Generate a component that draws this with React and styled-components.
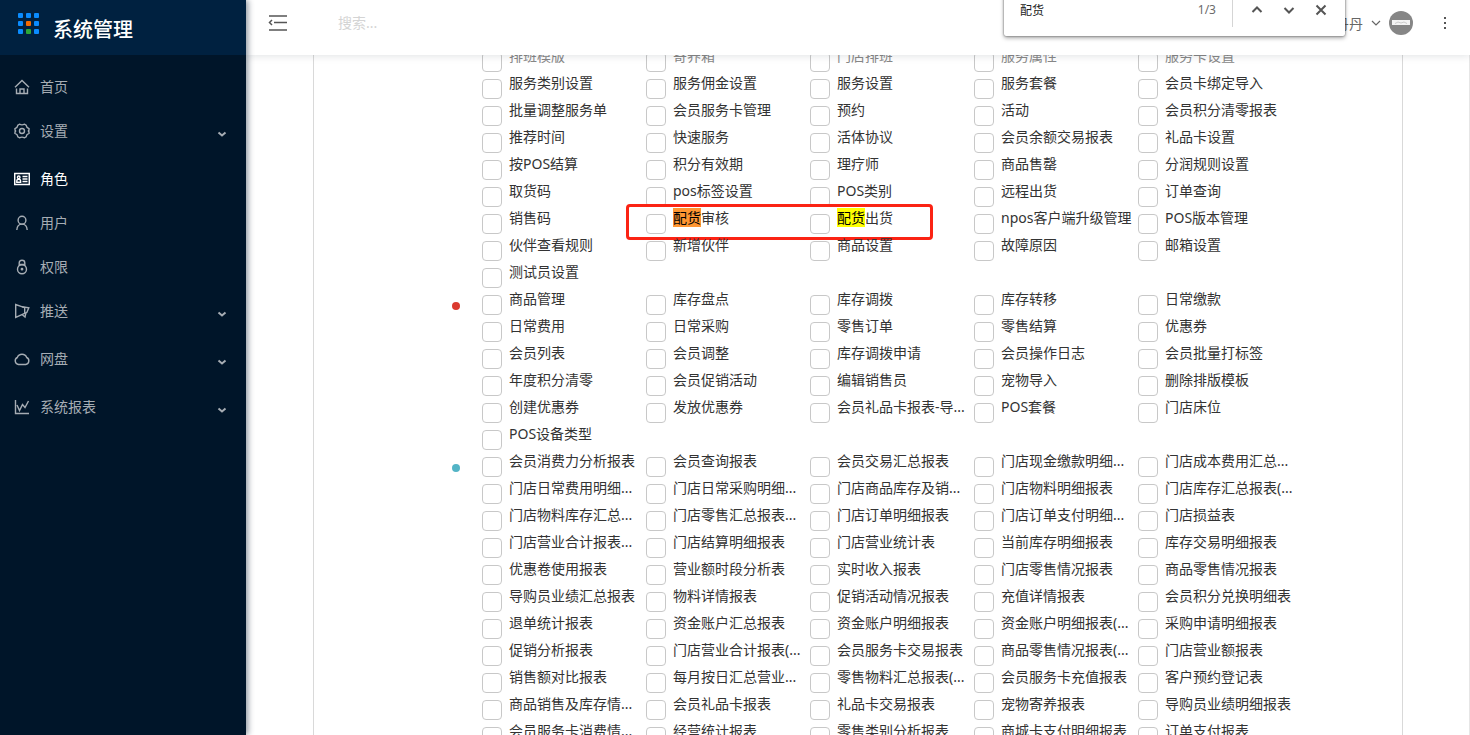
import React, { useState } from 'react';
import styled, { createGlobalStyle } from 'styled-components';

const GlobalStyle = createGlobalStyle`
  * {
    box-sizing: border-box;
  }

  body {
    margin: 0;
    background: #fff;
    color: #333;
    font-family: 'Noto Sans', 'Noto Sans CJK SC', sans-serif;
    font-size: 14px;
  }

  ul {
    list-style: none;
    margin: 0;
    padding: 0;
  }

  button {
    border: none;
    padding: 0;
    background: none;
    font: inherit;
    cursor: pointer;
  }
`;

const Layout = styled.div`
  display: flex;
  height: 100vh;
  overflow: hidden;
`;

const Sidebar = styled.aside`
  flex: 0 0 246px;
  z-index: 3;
  background: #001529;
  box-shadow: 2px 0 6px rgba(0, 21, 41, 0.45);
`;

const Brand = styled.div`
  display: flex;
  align-items: center;
  gap: 14px;
  height: 55px;
  padding: 0 16px 8px;
  background: #002140;
  color: #fff;
`;

const BrandName = styled.h1`
  margin: 0;
  padding-top: 12px;
  font-size: 20px;
  line-height: 24px;
  font-weight: 500;
`;

const Menu = styled.ul`
  padding: 12px 0;
`;

const MenuItem = styled.li`
  margin-bottom: ${(props) => (props.$sub ? 8 : 4)}px;
`;

const MenuLink = styled.a`
  display: flex;
  align-items: center;
  height: 40px;
  padding: 0 18px 0 14px;
  color: ${(props) => (props.$active ? '#fff' : '#a6adb4')};
  text-decoration: none;

  span {
    flex: 1;
    margin-left: 10px;
    padding-bottom: 2px;
  }
`;

const ArrowIcon = styled.svg`
  margin-top: 6px;
`;

const Main = styled.main`
  flex: 1;
  min-width: 0;
  display: flex;
  flex-direction: column;
`;

const Header = styled.header`
  position: relative;
  z-index: 2;
  flex: none;
  display: flex;
  align-items: center;
  height: 55px;
  padding: 0 18px 10px 22px;
  background: #fff;
  box-shadow: 0 1px 8px rgba(0, 21, 41, 0.12);
`;

const IconButton = styled.button`
  display: flex;
  align-items: center;
  justify-content: center;
  width: ${(props) => props.$width}px;
  height: 24px;
  color: #555;
`;

const SearchInput = styled.input`
  flex: 1;
  min-width: 0;
  margin-left: 50px;
  padding: 0;
  border: none;
  outline: none;
  font: inherit;

  &::placeholder {
    color: #d4d4d4;
  }
`;

const UserButton = styled.button`
  display: flex;
  align-items: center;
  gap: 7px;
  margin-right: 25px;
  color: #666;
`;

const FindBar = styled.div`
  position: absolute;
  z-index: 5;
  top: -16px;
  right: 125px;
  display: flex;
  align-items: center;
  width: 341px;
  height: 52px;
  padding: 0 8px 0 16px;
  background: #fff;
  border-radius: 2px;
  box-shadow: 0 0 2px rgba(0, 0, 0, 0.6), 0 2px 4px rgba(0, 0, 0, 0.35);
`;

const FindInput = styled.input`
  flex: 1;
  min-width: 0;
  padding: 0;
  border: none;
  outline: none;
  font: inherit;
  font-size: 12px;
  color: #222;
`;

const FindCount = styled.span`
  padding-right: 16px;
  border-right: 1px solid #d5d5d5;
  margin-right: 8px;
  font-size: 12px;
  line-height: 34px;
  color: #6b6b6b;
`;

const Content = styled.div`
  flex: 1;
  min-height: 0;
  overflow: hidden;
  padding: 0 66px 0 67px;
  border-right: 1px solid #e6e6e6;
`;

const Panel = styled.form`
  margin-top: -9px;
  padding: 0 100px 0 138px;
  border: 1px solid #d9d9d9;
  border-width: 0 1px;
`;

const Group = styled.section`
  display: flex;
`;

const Dot = styled.i`
  flex: none;
  width: 8px;
  height: 8px;
  margin: 13px 22px 0 0;
  border-radius: 50%;
  background: ${(props) => props.$color};
`;

const PermissionGrid = styled.ul`
  flex: 1;
  max-width: 820px;
  display: grid;
  grid-template-columns: repeat(5, 1fr);
`;

const Permission = styled.li`
  position: relative;
  height: 27px;
`;

const PermissionLabel = styled.label`
  display: flex;
  gap: 7px;
  line-height: 20px;
  white-space: nowrap;
  color: ${(props) => (props.$faded ? '#888' : '#333')};
`;

const Checkbox = styled.input`
  appearance: none;
  flex: none;
  width: 20px;
  height: 20px;
  margin: 6px 0 0;
  border: 1px solid #c8c8c8;
  border-radius: 4px;
  background: #fff;

  &:checked {
    background: #1890ff;
    border-color: #1890ff;
  }
`;

const Mark = styled.mark`
  background: ${(props) => (props.$current ? '#ff9632' : '#ff0')};
  color: #000;
`;

const Callout = styled.div`
  position: absolute;
  top: -4px;
  left: -20px;
  width: 307px;
  height: 36px;
  border: 3px solid #fb2314;
  border-radius: 4px;
  pointer-events: none;
`;

const MENU = [
  { name: '首页', icon: 'home' },
  { name: '设置', icon: 'setting', sub: true },
  { name: '角色', icon: 'role', active: true },
  { name: '用户', icon: 'user' },
  { name: '权限', icon: 'lock' },
  { name: '推送', icon: 'push', sub: true },
  { name: '网盘', icon: 'cloud', sub: true },
  { name: '系统报表', icon: 'chart', sub: true },
];

const GROUPS = [
  {
    color: 'transparent',
    items: [
      '排班模版', '寄养箱', '门店排班', '服务属性', '服务卡设置',
      '服务类别设置', '服务佣金设置', '服务设置', '服务套餐', '会员卡绑定导入',
      '批量调整服务单', '会员服务卡管理', '预约', '活动', '会员积分清零报表',
      '推荐时间', '快速服务', '活体协议', '会员余额交易报表', '礼品卡设置',
      '按POS结算', '积分有效期', '理疗师', '商品售罄', '分润规则设置',
      '取货码', 'pos标签设置', 'POS类别', '远程出货', '订单查询',
      '销售码', '配货审核', '配货出货', 'npos客户端升级管理', 'POS版本管理',
      '伙伴查看规则', '新增伙伴', '商品设置', '故障原因', '邮箱设置',
      '测试员设置',
    ],
  },
  {
    color: '#db3a2f',
    items: [
      '商品管理', '库存盘点', '库存调拨', '库存转移', '日常缴款',
      '日常费用', '日常采购', '零售订单', '零售结算', '优惠券',
      '会员列表', '会员调整', '库存调拨申请', '会员操作日志', '会员批量打标签',
      '年度积分清零', '会员促销活动', '编辑销售员', '宠物导入', '删除排版模板',
      '创建优惠券', '发放优惠券', '会员礼品卡报表-导...', 'POS套餐', '门店床位',
      'POS设备类型',
    ],
  },
  {
    color: '#53b4c6',
    items: [
      '会员消费力分析报表', '会员查询报表', '会员交易汇总报表', '门店现金缴款明细...', '门店成本费用汇总...',
      '门店日常费用明细...', '门店日常采购明细...', '门店商品库存及销...', '门店物料明细报表', '门店库存汇总报表(...',
      '门店物料库存汇总...', '门店零售汇总报表...', '门店订单明细报表', '门店订单支付明细...', '门店损益表',
      '门店营业合计报表...', '门店结算明细报表', '门店营业统计表', '当前库存明细报表', '库存交易明细报表',
      '优惠卷使用报表', '营业额时段分析表', '实时收入报表', '门店零售情况报表', '商品零售情况报表',
      '导购员业绩汇总报表', '物料详情报表', '促销活动情况报表', '充值详情报表', '会员积分兑换明细表',
      '退单统计报表', '资金账户汇总报表', '资金账户明细报表', '资金账户明细报表(...', '采购申请明细报表',
      '促销分析报表', '门店营业合计报表(...', '会员服务卡交易报表', '商品零售情况报表(...', '门店营业额报表',
      '销售额对比报表', '每月按日汇总营业...', '零售物料汇总报表(...', '会员服务卡充值报表', '客户预约登记表',
      '商品销售及库存情...', '会员礼品卡报表', '礼品卡交易报表', '宠物寄养报表', '导购员业绩明细报表',
      '会员服务卡消费情...', '经营统计报表', '零售类别分析报表', '商城卡支付明细报表', '订单支付报表',
    ],
  },
];

const ICONS = {
  home: (
    <>
      <path d="M1 8.200 8 1.500l7 6.700" />
      <path d="M2.500 9.500v5h11v-5M6 14.500V10h4v4.500" />
    </>
  ),
  setting: (
    <>
      <path d="M5.500 1.200q2.500 1.300 5 0l1.600 1q.3 2.500 2.900 3.400v1.500q-1.300.9 0 1.800v1.500q-2.600.9-2.900 3.400l-1.600 1q-2.500-1.300-5 0l-1.600-1Q3.600 11.300 1 10.400V8.900q1.300-.9 0-1.800V5.600q2.600-.9 2.900-3.400z" />
      <circle cx="8" cy="8" r="2.500" />
    </>
  ),
  role: (
    <>
      <path d="M.7 2.500h14.600v11H.700z" strokeWidth="1.500" />
      <circle cx="4.700" cy="6.300" r="1.300" />
      <path d="M2.800 11.200V9.800q0-1.500 1.900-1.500t1.900 1.500v1.400zM8.500 5.500h5M8.500 8h5M8.500 10.500h5" />
    </>
  ),
  user: (
    <>
      <circle cx="8" cy="5.200" r="3.900" />
      <path d="M2.800 15c.2-3.800 2.400-5.900 5.200-5.900s5 2.100 5.200 5.900" />
    </>
  ),
  lock: (
    <>
      <circle cx="8" cy="10.200" r="4.500" />
      <path d="M5.200 6.700V4Q5.200 1.300 8 1.300T10.800 4v2.700M5.200 5.500h5.600" />
      <circle cx="8" cy="10.200" r=".7" fill="currentColor" />
    </>
  ),
  push: (
    <>
      <path d="M1.700 1.500v13l9-4.200V4.700z" />
      <path d="M8 3.700l6.800 1.200-2 4.600-2.100.8M12 9.500 11 14l-3-2.500" />
    </>
  ),
  cloud: <path d="M4.500 13.500a3.700 3.700 0 0 1-1.200-7A5 5 0 0 1 12.700 6.500a3.700 3.700 0 0 1-1 7z" />,
  chart: <path d="M1.500 1v13.500H15M3 6l2.500 5.500L8.500 5.500l2.500 3 3.500-6.500" />,
};

function MenuIcon({ name }) {
  return (
    <svg width="16" height="16" viewBox="0 0 16 16" fill="none" stroke="currentColor" strokeWidth="1.400" aria-hidden="true">
      {ICONS[name]}
    </svg>
  );
}

function Logo() {
  const colors = ['#0a8cff', '#0a8cff', '#0a8cff', '#0a8cff', '#f56a00', '#0a8cff', '#0a8cff', '#2ca838', '#0a8cff'];
  return (
    <svg width="23" height="23" viewBox="0 0 23 23" aria-hidden="true">
      {colors.map((color, i) => (
        <rect key={i} x={2 + (i % 3) * 8} y={1 + Math.floor(i / 3) * 8} width="5" height="5" rx="1" fill={color} />
      ))}
    </svg>
  );
}

function Chevron({ d, width = 2 }) {
  return (
    <svg width="12" height="12" viewBox="0 0 12 12" fill="none" stroke="currentColor" strokeWidth={width} aria-hidden="true">
      <path d={d} />
    </svg>
  );
}

function renderName(name) {
  if (!name.startsWith('配货')) return name;
  return (
    <>
      <Mark $current={name === '配货审核'}>配货</Mark>
      {name.slice(2)}
    </>
  );
}

export default function App() {
  const [checked, setChecked] = useState({});
  const [keyword, setKeyword] = useState('配货');

  function handleChange(evt) {
    setChecked({ ...checked, [evt.target.name]: evt.target.checked });
  }

  return (
    <Layout>
      <GlobalStyle />
      <Sidebar>
        <Brand>
          <Logo />
          <BrandName>系统管理</BrandName>
        </Brand>
        <nav>
          <Menu>
            {MENU.map((item) => (
              <MenuItem key={item.name} $sub={item.sub}>
                <MenuLink href="#" $active={item.active}>
                  <MenuIcon name={item.icon} />
                  <span>{item.name}</span>
                  {item.sub && (
                    <ArrowIcon width="12" height="12" viewBox="0 0 12 12" fill="none" stroke="currentColor" strokeWidth="2">
                      <path d="M2.500 4.500 6 7.500l3.500-3" />
                    </ArrowIcon>
                  )}
                </MenuLink>
              </MenuItem>
            ))}
          </Menu>
        </nav>
      </Sidebar>

      <Main>
        <Header>
          <IconButton type="button" aria-label="收起菜单" $width={20}>
            <svg width="20" height="18" viewBox="0 0 20 18" fill="none" stroke="currentColor" strokeWidth="1.500">
              <path d="M1 2h18M6 8.500h13M1 16h18M4 6 1.500 8.500 4 11" />
            </svg>
          </IconButton>
          <SearchInput type="text" placeholder="搜索..." aria-label="搜索" />
          <UserButton type="button">
            丹丹
            <Chevron d="M2 4l4 4 4-4" width={1.2} />
            <svg width="24" height="24" viewBox="0 0 24 24" aria-hidden="true">
              <circle cx="12" cy="12" r="12" fill="#868686" />
              <rect x="3" y="9" width="18" height="5" fill="#f4f4f4" />
              <path d="M6 12.500 9 11l3 1 3-1 3 1.500" fill="none" stroke="#ccc" />
            </svg>
          </UserButton>
          <IconButton type="button" aria-label="更多" $width={14}>
            <svg width="4" height="14" viewBox="0 0 4 14" fill="currentColor">
              <path d="M1 1h2v2H1zM1 6h2v2H1zM1 11h2v2H1z" />
            </svg>
          </IconButton>
          <FindBar>
            <FindInput aria-label="查找" value={keyword} onChange={(evt) => setKeyword(evt.target.value)} />
            <FindCount>1/3</FindCount>
            <IconButton type="button" aria-label="上一个" $width={32}>
              <Chevron d="M1.500 8 6 3.500 10.500 8" />
            </IconButton>
            <IconButton type="button" aria-label="下一个" $width={32}>
              <Chevron d="M1.500 4 6 8.500 10.500 4" />
            </IconButton>
            <IconButton type="button" aria-label="关闭" $width={32}>
              <Chevron d="M1.500 1.500l9 9M10.500 1.500l-9 9" />
            </IconButton>
          </FindBar>
        </Header>

        <Content>
          <Panel>
            {GROUPS.map((group, groupIndex) => (
              <Group key={group.color}>
                <Dot $color={group.color} />
                <PermissionGrid>
                  {group.items.map((name, i) => (
                    <Permission key={name}>
                      <PermissionLabel $faded={groupIndex === 0 && i < 5}>
                        <Checkbox type="checkbox" name={name} checked={!!checked[name]} onChange={handleChange} />
                        <span>{renderName(name)}</span>
                      </PermissionLabel>
                      {name === '配货审核' && <Callout />}
                    </Permission>
                  ))}
                </PermissionGrid>
              </Group>
            ))}
          </Panel>
        </Content>
      </Main>
    </Layout>
  );
}
